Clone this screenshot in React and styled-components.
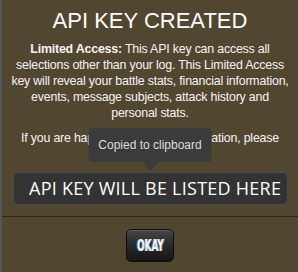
import styled, { createGlobalStyle } from 'styled-components'

const GlobalStyle = createGlobalStyle`
  html, body {
    margin: 0;
    padding: 0;
    background: #514630;
  }
`

const App = () => {
  return (
    <>
      <GlobalStyle />
      <Dialog>
        <Body>
          <Title>API KEY CREATED</Title>
          <Text>
            <b>Limited Access:</b> This API key can access all selections other than
            your log. This Limited Access key will reveal your battle stats, financial
            information, events, message subjects, attack history and personal stats.
          </Text>
          <Text $single>If you are happy to share this information, please</Text>
          <KeyWrap>
            <KeyBox>API KEY WILL BE LISTED HERE</KeyBox>
            <Tooltip>Copied to clipboard</Tooltip>
          </KeyWrap>
        </Body>
        <Footer>
          <Button>
            <ButtonLabel>OKAY</ButtonLabel>
          </Button>
        </Footer>
      </Dialog>
    </>
  )
}

export default App

const Dialog = styled.div`
  width: 298px;
  height: 272px;
  box-sizing: border-box;
  border-left: 2px solid #55575a;
  background: #514630;
  font-family: "Liberation Sans", Arial, sans-serif;
  color: #f4f4f4;
  overflow: hidden;
`

const Body = styled.div`
  padding: 8px 9px 11px 9px;
  border-bottom: 1px solid #2a2720;
`

const Title = styled.h1`
  margin: 0 0 7px;
  font-size: 22px;
  line-height: 26px;
  font-weight: 400;
  text-align: center;
  color: #ffffff;
`

const Text = styled.p`
  margin: 0 -1px 9px;
  font-size: 12.4px;
  line-height: 16px;
  letter-spacing: -0.2px;
  text-align: center;
  white-space: ${p => (p.$single ? 'nowrap' : 'normal')};
  b {
    font-weight: 700;
  }
`

const KeyWrap = styled.div`
  position: relative;
  margin-top: 26px;
  padding: 0 1px 0 2px;
`

const KeyBox = styled.div`
  height: 33px;
  box-sizing: border-box;
  border: 1px solid #4c4c4c;
  border-radius: 5px;
  background: #333333;
  padding: 0 0 0 15px;
  font-family: "Open Sans", "DejaVu Sans", sans-serif;
  font-size: 18px;
  letter-spacing: 0.25px;
  line-height: 31px;
  color: #ffffff;
  white-space: nowrap;
  overflow: hidden;
`

const Tooltip = styled.div`
  position: absolute;
  left: 50%;
  bottom: calc(100% + 10px);
  transform: translateX(-50%);
  width: 123px;
  height: 34px;
  box-sizing: border-box;
  border-radius: 4px;
  background: #3b3b3b;
  color: #dcdcdc;
  font-size: 12px;
  line-height: 34px;
  text-align: center;
  white-space: nowrap;

  &::after {
    content: '';
    position: absolute;
    left: 50%;
    top: 100%;
    margin-left: -8px;
    border-left: 8px solid transparent;
    border-right: 8px solid transparent;
    border-top: 9px solid #3b3b3b;
  }
`

const Footer = styled.div`
  display: flex;
  justify-content: center;
  padding-top: 12px;
`

const Button = styled.button`
  width: 48px;
  height: 33px;
  padding: 0;
  border: 1px solid #0e0e0e;
  border-radius: 5px;
  background: linear-gradient(#474747 0%, #2a2a2a 45%, #161616 100%);
  box-shadow: inset 0 1px 0 rgba(255, 255, 255, 0.12);
  cursor: pointer;
  display: flex;
  align-items: center;
  justify-content: center;
`

const ButtonLabel = styled.span`
  display: inline-block;
  font-family: "DejaVu Sans Condensed", "DejaVu Sans", sans-serif;
  font-stretch: condensed;
  font-weight: 700;
  font-size: 15px;
  color: #eef4ff;
  transform: scaleX(0.66);
  text-shadow: -1px 0 rgba(70, 150, 255, 0.8), 1px 0 rgba(255, 200, 90, 0.7);
`
